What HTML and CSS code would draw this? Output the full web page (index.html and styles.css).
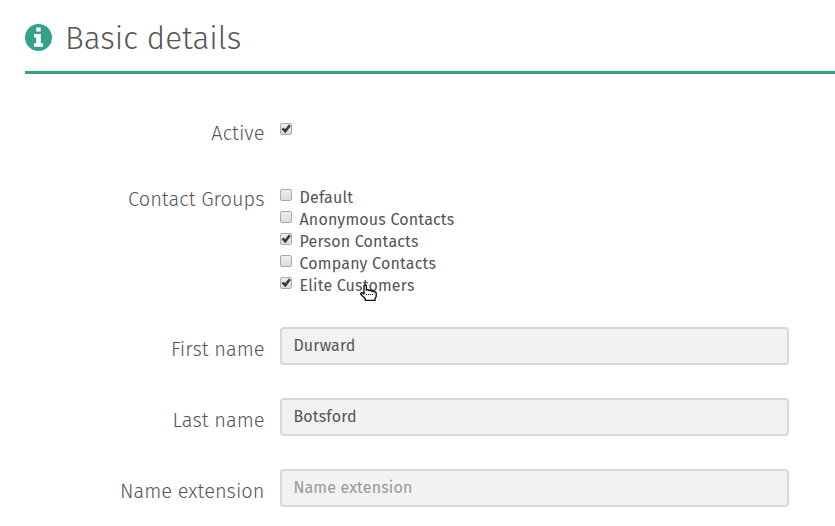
FILE: index.html
```
<!DOCTYPE html>
<html lang="en">
<head>
<meta charset="utf-8">
<title>Basic details</title>
<link rel="stylesheet" href="styles.css">
</head>
<body>
<form class="panel">
  <header class="heading">
    <svg class="info" viewBox="0 0 27 27" aria-hidden="true"><circle cx="13.5" cy="13.5" r="13.5" fill="#34a28b"/><path fill="#fff" d="M11.3 3.5h4.4v4h-4.4zM9 10h6.8v9.3h2.3v3.4H9v-3.4h2.2v-5.8H9z"/></svg>
    <h1>Basic details</h1>
  </header>
  <div class="row active-row">
    <label class="label" for="active">Active</label>
    <input class="check" id="active" type="checkbox" checked>
  </div>
  <div class="row groups-row">
    <span class="label">Contact Groups</span>
    <div class="options">
      <label class="option"><input class="check" type="checkbox"><span>Default</span></label>
      <label class="option"><input class="check" type="checkbox"><span>Anonymous Contacts</span></label>
      <label class="option"><input class="check" type="checkbox" checked><span>Person Contacts</span></label>
      <label class="option"><input class="check" type="checkbox"><span>Company Contacts</span></label>
      <label class="option"><input class="check" type="checkbox" checked><span>Elite Customers</span>
        <svg class="pointer" viewBox="0 0 17 18" aria-hidden="true"><path fill="#fff" stroke="#111" stroke-width="1.4" stroke-linejoin="round" d="M4 10V2.2Q4 1 5.2 1t1.2 1.2V6q2-.8 2.6.6 1.8-.8 2.6.6 1.6-.6 2.2.6 2.4-.4 2.4 1.7v3L15 14.6v1.8H5.3v-1.7L1 10.6Q.3 9.2 1.4 8.8q1.4-.3 2.6 1.2z"/><path stroke="#111" stroke-dasharray="1 1" d="M6 10.5h8"/></svg>
      </label>
    </div>
  </div>
  <div class="row field-row">
    <label class="label" for="first">First name</label>
    <input class="field" id="first" type="text" value="Durward">
  </div>
  <div class="row field-row">
    <label class="label" for="last">Last name</label>
    <input class="field" id="last" type="text" value="Botsford">
  </div>
  <div class="row field-row">
    <label class="label" for="ext">Name extension</label>
    <input class="field" id="ext" type="text" placeholder="Name extension">
  </div>
</form>
</body>
</html>
```
FILE: styles.css
```
* { box-sizing: border-box; }
body {
  margin: 0;
  overflow: hidden;
  background: #fff;
  color: #555;
  font-family: "Fira Sans", "Open Sans", sans-serif;
}
.panel { height: 526px; overflow: hidden; }
.heading {
  display: flex;
  height: 74px;
  margin-left: 25px;
  border-bottom: 3px solid #34a28b;
}
.info { width: 27px; height: 27px; margin: 24px 13px 0 0; }
h1 {
  margin: 18px 0 0;
  font-size: 31.4px;
  line-height: 42px;
  font-weight: 300;
  white-space: nowrap;
}
.row { display: flex; align-items: flex-start; }
.label {
  width: 264.5px;
  margin-right: 15.5px;
  padding-top: 9px;
  text-align: right;
  font-size: 20px;
  line-height: 26px;
  letter-spacing: .03px;
  font-weight: 300;
  white-space: nowrap;
}
.active-row { margin-top: 37px; height: 66px; }
.active-row .check { margin-top: 12px; }
.groups-row { height: 150px; }
.options { padding-top: 9px; }
.option {
  position: relative;
  display: flex;
  gap: 7.5px;
  height: 22px;
  font-size: 16px;
  letter-spacing: .18px;
  line-height: 24px;
  white-space: nowrap;
}
.check {
  appearance: none;
  flex: none;
  width: 12px;
  height: 12px;
  margin: 3px 0 0;
  border: 1px solid #a9a9a9;
  border-radius: 2px;
  background: linear-gradient(#eee, #dcdcdc);
}
.check:checked::before {
  content: "";
  display: block;
  width: 10px;
  height: 10px;
  background: #3c3c3c;
  clip-path: polygon(5% 52%, 25% 35%, 40% 52%, 78% 5%, 99% 21%, 44% 92%);
}
.pointer { position: absolute; left: 80px; top: 10px; width: 17px; height: 18px; fill: none; }
.field-row { height: 71px; }
.field {
  width: 509px;
  height: 38px;
  padding: 0 11.4px 2px;
  border: 2px solid #d7d7d7;
  border-radius: 4px;
  outline: 0;
  background: #f2f2f2;
  color: #555;
  font-family: inherit;
  font-size: 16px;
  letter-spacing: .15px;
}
.field::placeholder { color: #999; opacity: 1; }
```
